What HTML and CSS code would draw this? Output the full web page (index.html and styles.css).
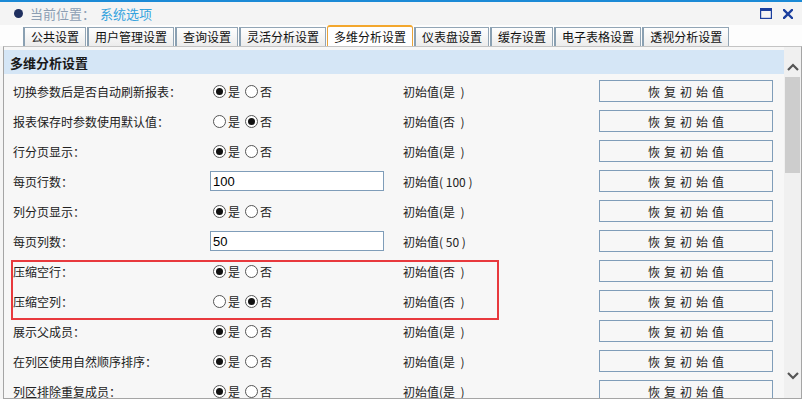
FILE: index.html
```html
<!DOCTYPE html>
<html lang="zh-CN">
<head>
<meta charset="utf-8">
<title>系统选项</title>
<link rel="stylesheet" href="styles.css">
</head>
<body>
<div class="topline"></div>
<div class="header">
  <span class="bullet"></span>
  <span class="loc">当前位置：</span>
  <span class="crumb">系统选项</span>
  <div class="winbtns">
    <svg class="ico" width="12" height="11" viewBox="0 0 12 11"><rect x="0.5" y="0.5" width="11" height="10" fill="none" stroke="#1b3f9e" stroke-width="1.4"/><rect x="0" y="0" width="12" height="3" fill="#1b3f9e"/></svg>
    <svg class="ico" width="10" height="10" viewBox="0 0 10 10"><path d="M1 1 L9 9 M9 1 L1 9" stroke="#1b3f9e" stroke-width="2.4" stroke-linecap="square"/></svg>
  </div>
</div>
<div class="tabs">
  <div class="tab">公共设置</div>
  <div class="tab">用户管理设置</div>
  <div class="tab">查询设置</div>
  <div class="tab">灵活分析设置</div>
  <div class="tab active">多维分析设置</div>
  <div class="tab">仪表盘设置</div>
  <div class="tab">缓存设置</div>
  <div class="tab">电子表格设置</div>
  <div class="tab">透视分析设置</div>
</div>
<div class="panel">
  <div class="content">
    <div class="section">多维分析设置</div>
    <div class="rows">
      <div class="row"><span class="label">切换参数后是否自动刷新报表：</span><span class="radios"><span class="radio on"></span>是<span class="radio"></span>否</span><span class="init">初始值(是&nbsp;&nbsp;)</span><button class="btn">恢复初始值</button></div>
      <div class="row"><span class="label">报表保存时参数使用默认值：</span><span class="radios"><span class="radio"></span>是<span class="radio on"></span>否</span><span class="init">初始值(否&nbsp;&nbsp;)</span><button class="btn">恢复初始值</button></div>
      <div class="row"><span class="label">行分页显示：</span><span class="radios"><span class="radio on"></span>是<span class="radio"></span>否</span><span class="init">初始值(是&nbsp;&nbsp;)</span><button class="btn">恢复初始值</button></div>
      <div class="row"><span class="label">每页行数：</span><span class="field"><input class="txt" type="text" value="100"></span><span class="init">初始值(&nbsp;100&nbsp;)</span><button class="btn">恢复初始值</button></div>
      <div class="row"><span class="label">列分页显示：</span><span class="radios"><span class="radio on"></span>是<span class="radio"></span>否</span><span class="init">初始值(是&nbsp;&nbsp;)</span><button class="btn">恢复初始值</button></div>
      <div class="row"><span class="label">每页列数：</span><span class="field"><input class="txt" type="text" value="50"></span><span class="init">初始值(&nbsp;50&nbsp;)</span><button class="btn">恢复初始值</button></div>
      <div class="group">
        <div class="row"><span class="label">压缩空行：</span><span class="radios"><span class="radio on"></span>是<span class="radio"></span>否</span><span class="init">初始值(否&nbsp;&nbsp;)</span><button class="btn">恢复初始值</button></div>
        <div class="row"><span class="label">压缩空列：</span><span class="radios"><span class="radio"></span>是<span class="radio on"></span>否</span><span class="init">初始值(否&nbsp;&nbsp;)</span><button class="btn">恢复初始值</button></div>
      </div>
      <div class="row"><span class="label">展示父成员：</span><span class="radios"><span class="radio on"></span>是<span class="radio"></span>否</span><span class="init">初始值(是&nbsp;&nbsp;)</span><button class="btn">恢复初始值</button></div>
      <div class="row"><span class="label">在列区使用自然顺序排序：</span><span class="radios"><span class="radio on"></span>是<span class="radio"></span>否</span><span class="init">初始值(是&nbsp;&nbsp;)</span><button class="btn">恢复初始值</button></div>
      <div class="row"><span class="label">列区排除重复成员：</span><span class="radios"><span class="radio on"></span>是<span class="radio"></span>否</span><span class="init">初始值(是&nbsp;&nbsp;)</span><button class="btn">恢复初始值</button></div>
    </div>
  </div>
  <div class="scrollbar">
    <svg class="arrow" width="12" height="8" viewBox="0 0 12 8"><path d="M1 7 L6 2 L11 7" fill="none" stroke="#555" stroke-width="2.2"/></svg>
    <div class="track"><div class="thumb"></div></div>
    <svg class="arrow down" width="12" height="8" viewBox="0 0 12 8"><path d="M1 1 L6 6 L11 1" fill="none" stroke="#555" stroke-width="2.2"/></svg>
  </div>
</div>
</body>
</html>
```
FILE: styles.css
```css
* { box-sizing: border-box; }
html, body { margin: 0; padding: 0; }
body {
  width: 802px;
  height: 399px;
  overflow: hidden;
  background: #f5f5f5;
  font-family: "Noto Sans CJK SC", "DejaVu Sans", sans-serif;
  font-size: 12px;
  color: #222;
}
.topline { height: 2px; background: #1b8ad6; }
.header {
  height: 23px;
  display: flex;
  align-items: center;
  padding-left: 14px;
  background: #f4f4f4;
}
.bullet {
  width: 9px; height: 9px; border-radius: 50%;
  background: #1f2f5f;
  margin-right: 7px;
}
.loc { color: #8d9eb3; font-size: 13px; margin-right: 5px; }
.crumb { color: #35a3de; font-size: 13px; }
.winbtns {
  margin-left: auto;
  display: flex;
  align-items: center;
  gap: 11px;
  padding-right: 9px;
}
.ico { display: block; }
.tabs {
  height: 21px;
  display: flex;
  align-items: flex-end;
  gap: 1px;
  padding-left: 23px;
  background: #fdfdfd;
}
.tab {
  height: 19px;
  padding: 0 6px;
  border: 1px solid #92a5b5;
  border-left: 2px solid #8aa0b2;
  border-bottom: none;
  background: linear-gradient(#fefefe, #ececec);
  display: flex;
  align-items: center;
  line-height: 1;
  color: #111;
  font-size: 12px;
}
.tab.active {
  height: 21px;
  background: #fff;
  border: 1px solid #e9a33a;
  border-top: 2px solid #f3a72e;
  border-bottom: none;
  border-radius: 3px 3px 0 0;
  padding: 0 6px;
}
.panel {
  height: 353px;
  display: flex;
  margin-left: 3px;
  border: 1px solid #a5a5a5;
  border-top: 1px solid #c4c4c4;
  background: #f7f7f7;
  overflow: hidden;
}
.content {
  flex: 1;
  padding-top: 3px;
  overflow: hidden;
}
.section {
  height: 24px;
  background: #d5e6f6;
  display: flex;
  align-items: center;
  padding-left: 6px;
  font-weight: bold;
  font-size: 13px;
  color: #1a1a1a;
}
.rows { padding-top: 2px; }
.group { position: relative; }
.group::after {
  content: "";
  position: absolute;
  left: 7px;
  top: 4px;
  width: 484px;
  height: 56px;
  border: 2px solid #e8393d;
  pointer-events: none;
}
.row {
  height: 30px;
  display: grid;
  grid-template-columns: 197px 193px 196px 174px;
  align-items: center;
  padding-left: 9px;
}
.label { white-space: nowrap; }
.radios { display: flex; align-items: center; padding-left: 3px; }
.radio {
  width: 13px; height: 13px;
  border: 1px solid #555;
  border-radius: 50%;
  background: #fff;
  margin-right: 2px;
  display: flex; align-items: center; justify-content: center;
}
.radios .radio:nth-of-type(2) { margin-left: 5px; }
.radio.on::before {
  content: "";
  width: 7px; height: 7px; border-radius: 50%;
  background: #111;
}
.field { display: flex; }
.txt {
  width: 174px;
  height: 20px;
  border: 1px solid #7f9db9;
  background: #fff;
  padding: 0 2px;
  font-family: "Liberation Sans", "Noto Sans CJK SC", sans-serif;
  font-size: 13px;
  color: #000;
  margin: 0;
}
.init { white-space: nowrap; }
.btn {
  width: 174px;
  height: 22px;
  margin: 0;
  border: 1px solid #7f9db9;
  background: #f7f7f7;
  font-family: "Noto Sans CJK SC", sans-serif;
  font-size: 12px;
  letter-spacing: 4px;
  padding: 0 0 0 4px;
  color: #222;
}
.scrollbar {
  width: 17px;
  background: #f0f0f0;
  display: flex;
  flex-direction: column;
  align-items: center;
  padding-top: 16px;
}
.arrow { display: block; flex: none; }
.track { width: 15px; flex: 1; padding-top: 6px; }
.thumb { width: 15px; height: 96px; background: #cdcdcd; }
.arrow.down { margin-bottom: 18px; }
```
